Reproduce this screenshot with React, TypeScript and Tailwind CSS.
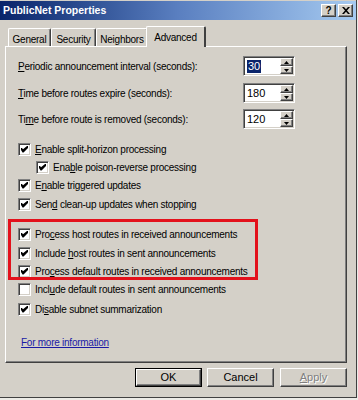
import React from "react";

const raised =
  "border border-t-white border-l-white border-r-[#404040] border-b-[#404040] shadow-[inset_-1px_-1px_0_#808080]";

function Check({ checked }: { checked: boolean }) {
  return (
    <span className="w-[13px] h-[13px] shrink-0 flex items-center justify-center bg-white border border-t-[#808080] border-l-[#808080] border-r-white border-b-white shadow-[inset_1px_1px_0_#404040,inset_-1px_-1px_0_#d4d0c8]">
      {checked && (
        <svg width="7" height="7" viewBox="0 0 7 7">
          <path d="M0 2h1l1 1.2L6 0h1v2L2.5 6.5h-1L0 4z" fill="#000" />
        </svg>
      )}
    </span>
  );
}

function Label({ text, k }: { text: string; k: number }) {
  return (
    <span>
      {text.slice(0, k)}
      <u>{text[k]}</u>
      {text.slice(k + 1)}
    </span>
  );
}

function CheckRow({
  text,
  k,
  checked = true,
  indent = false,
  mt = "mt-0",
}: {
  text: string;
  k: number;
  checked?: boolean;
  indent?: boolean;
  mt?: string;
}) {
  return (
    <div className={`flex items-center h-[18px] gap-[4px] ${indent ? "pl-[18px]" : ""} ${mt}`}>
      <Check checked={checked} />
      <Label text={text} k={k} />
    </div>
  );
}

function Spinner({ value, selected = false }: { value: string; selected?: boolean }) {
  return (
    <div className="w-[52px] h-[20px] flex bg-white border border-t-[#808080] border-l-[#808080] border-r-white border-b-white shadow-[inset_1px_1px_0_#404040,inset_-1px_-1px_0_#d4d0c8]">
      <div className="flex-1 flex items-center pl-[3px] text-[11px] tracking-normal">
        {selected ? <span className="bg-[#0a246a] text-white px-px leading-[13px]">{value}</span> : value}
      </div>
      <div className="w-[14px] flex flex-col p-px pl-0">
        {[0, 1].map((i) => (
          <div key={i} className={`flex-1 flex items-center justify-center bg-[#d4d0c8] ${raised}`}>
            <svg width="5" height="3" viewBox="0 0 5 3">
              <path d={i === 0 ? "M2.5 0L5 3H0z" : "M0 0h5L2.5 3z"} fill="#000" />
            </svg>
          </div>
        ))}
      </div>
    </div>
  );
}

function Tab({ name, active = false, w }: { name: string; active?: boolean; w: string }) {
  if (active) {
    return (
      <div
        className={`${w} h-[21px] -mx-[2px] -mb-px z-10 relative flex justify-center pt-[3px] bg-[#d4d0c8] border-l border-t border-t-white border-l-white border-r-2 border-r-[#404040] rounded-t-[2px]`}
      >
        {name}
      </div>
    );
  }
  return (
    <div
      className={`${w} h-[18px] flex justify-center pt-[3px] bg-[#d4d0c8] border-l border-t border-t-white border-l-white border-r border-r-[#404040] shadow-[inset_-1px_0_0_#808080] rounded-t-[2px]`}
    >
      {name}
    </div>
  );
}

export default function App() {
  return (
    <div className="w-[358px] h-[400px] bg-[#ecebe6] overflow-hidden" style={{ fontFamily: '"Liberation Sans", Arial, sans-serif' }}>
      <div className="w-[357px] h-[398px] bg-[#d4d0c8] border-r border-b border-r-[#404040] border-b-[#404040] text-[10px] tracking-[-0.25px] text-black flex flex-col">
        {/* title bar */}
        <div className="h-[20px] flex items-center justify-between pl-[3px] pr-[3px] bg-gradient-to-r from-[#0a246a] via-[#5a7fc0] to-[#a6caf0] border-t border-t-[#d4d0c8]">
          <span className="text-white font-bold text-[10.5px] tracking-normal">PublicNet Properties</span>
          <div className="flex gap-[2px]">
            <div className={`w-[15px] h-[13px] bg-[#d4d0c8] ${raised} flex items-center justify-center font-bold text-[10px] leading-none`}>?</div>
            <div className={`w-[15px] h-[13px] bg-[#d4d0c8] ${raised} flex items-center justify-center`}>
              <svg width="8" height="7" viewBox="0 0 8 7">
                <path d="M0 0h2l2 2.3L6 0h2L5 3.5 8 7H6L4 4.7 2 7H0l3-3.5z" fill="#000" />
              </svg>
            </div>
          </div>
        </div>

        {/* tabs */}
        <div className="h-[26px] flex items-end pl-[8px]">
          <Tab name="General" w="w-[43px]" />
          <Tab name="Security" w="w-[45px]" />
          <Tab name="Neighbors" w="w-[52px]" />
          <Tab name="Advanced" active w="w-[60px]" />
        </div>

        {/* panel */}
        <div className="relative ml-[5px] mr-[9px] h-[317px] border border-t-white border-l-white border-r-[#404040] border-b-[#404040] shadow-[inset_-1px_-1px_0_#808080] pl-[12px]">
          <div className="flex items-center h-[20px] mt-[9px]">
            <div className="w-[225px]">
              <Label text="Periodic announcement interval (seconds):" k={0} />
            </div>
            <Spinner value="30" selected />
          </div>
          <div className="flex items-center h-[20px] mt-[7px]">
            <div className="w-[225px]">
              <Label text="Time before routes expire (seconds):" k={0} />
            </div>
            <Spinner value="180" />
          </div>
          <div className="flex items-center h-[20px] mt-[6px]">
            <div className="w-[225px]">
              <Label text="Time before route is removed (seconds):" k={2} />
            </div>
            <Spinner value="120" />
          </div>

          <CheckRow text="Enable split-horizon processing" k={0} mt="mt-[11px]" />
          <CheckRow text="Enable poison-reverse processing" k={3} indent />
          <CheckRow text="Enable triggered updates" k={1} />
          <CheckRow text="Send clean-up updates when stopping" k={3} mt="mt-[1px]" />
          <CheckRow text="Process host routes in received announcements" k={3} mt="mt-[12px]" />
          <CheckRow text="Include host routes in sent announcements" k={8} mt="mt-[1px]" />
          <CheckRow text="Process default routes in received announcements" k={3} />
          <CheckRow text="Include default routes in sent announcements" k={4} checked={false} />
          <CheckRow text="Disable subnet summarization" k={2} mt="mt-[2px]" />

          <div className="mt-[19px] pl-[3px] leading-[12px]">
            <span className="text-[#1a1aa6] underline">For more information</span>
          </div>

          {/* highlight annotation */}
          <div className="absolute left-[2px] top-[172px] w-[250px] h-[61px] border-[3px] border-[#e3111b] pointer-events-none" />
        </div>

        {/* buttons */}
        <div className="flex justify-end gap-[5px] pr-[9px] mt-[5px] text-[11px] tracking-normal">
          <div className="w-[67px] h-[19px] border border-black">
            <div className={`w-full h-full flex items-center justify-center ${raised}`}>OK</div>
          </div>
          <div className={`w-[67px] h-[19px] flex items-center justify-center ${raised}`}>Cancel</div>
          <div className={`w-[67px] h-[19px] flex items-center justify-center ${raised} text-[#808080] [text-shadow:1px_1px_0_#fff] ml-px`}>
            <Label text="Apply" k={0} />
          </div>
        </div>
      </div>
    </div>
  );
}
